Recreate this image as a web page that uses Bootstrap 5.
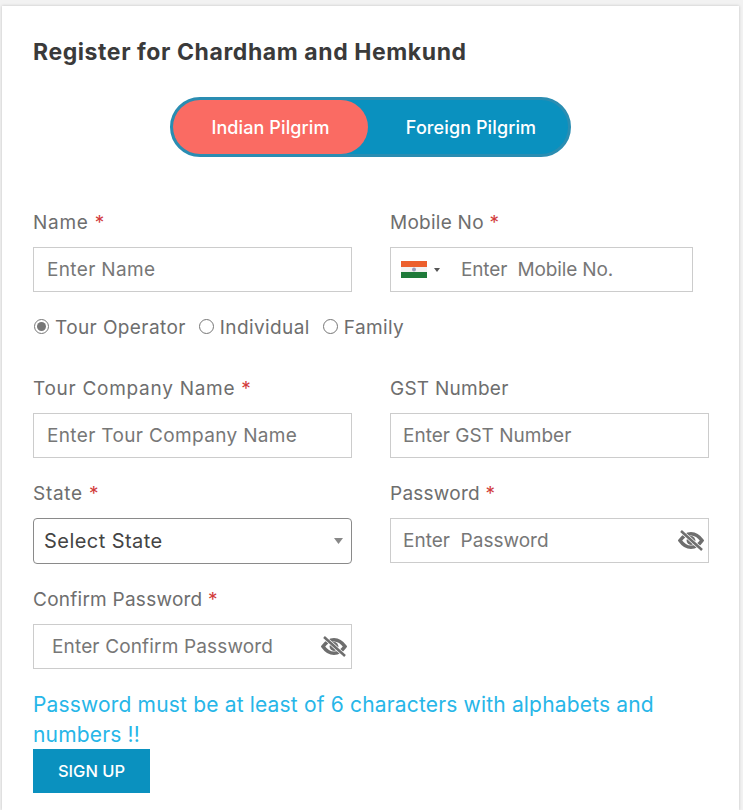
<!DOCTYPE html>
<html lang="en"><head><meta charset="utf-8"><title>Register</title>
<link href="https://cdn.jsdelivr.net/npm/bootstrap@5.3.0/dist/css/bootstrap.min.css" rel="stylesheet">
<style>
html,body{height:810px;overflow:hidden}
body{background:#f2f2f2;font-family:"Inter","Open Sans",sans-serif;color:#6e6e6e}
.sheet{margin:6px 0 0 2px;width:737px;height:804px;background:#fff;box-shadow:0 0 3px rgba(0,0,0,.2);padding:31px 30px 0 31px}
.sheet-title{font-size:23px;font-weight:700;color:#3a3a3a;line-height:30px;margin:0;letter-spacing:.58px}
.switcher{width:401px;height:60px;margin:30px 0 0 137px;border-radius:30px;background:#0a91bf;border:3px solid #2a8db2}
.switcher span{flex:0 0 195px;color:#fff;font-size:18px;font-weight:500;border-radius:27px;letter-spacing:.1px}
.switcher .tab-on{background:#fa6b63}
.switcher .tab-off{flex:1 1 auto;padding-left:6px}
.formrow{--bs-gutter-x:38px;--bs-gutter-y:0}
.first-row{margin-top:52px}
.second-row{margin-top:34px}
.lbl{font-size:19px;line-height:26px;color:#6e6e6e;margin:1px 0 11px;display:block;letter-spacing:.25px}
.lbl-wide{letter-spacing:.72px}
.lbl i{font-style:normal;color:#d23b3b}
.cell{margin-bottom:22px}
.form-control.fld{height:45px;border:1px solid #ccc;border-radius:0;font-size:19px;letter-spacing:.35px;color:#777;padding:0 13px;box-shadow:none}
.form-control.fld.tight{letter-spacing:0;padding-left:12px}
.fld::placeholder{color:#777;opacity:1}
.phone-wrap{width:303px}
.form-control.fld.phone{padding-left:70px;letter-spacing:-.15px}
.flag{position:absolute;left:11px;top:14px}
.flag-caret{position:absolute;left:44px;top:21px;width:0;height:0;border-left:3px solid transparent;border-right:3px solid transparent;border-top:4px solid #555}
.form-control.fld.pw{padding-right:44px}
.form-control.fld.pw-wide{padding-left:18px;letter-spacing:.15px}
.eye{position:absolute;right:5px;top:12px}
.radios{margin-top:23px;font-size:19px;line-height:26px;letter-spacing:.4px;gap:12px}
.radios label{gap:6px}
.radios input{width:15px;height:15px;margin:-3px 0 0 1px;accent-color:#777}
.form-select.sel{height:46px;border:1px solid #8a8a8a;border-radius:4px;padding:0 30px 0 10px;font-size:20px;letter-spacing:.45px;color:#444;box-shadow:none;background-size:9px 6px;background-position:right 8px center;background-image:url("data:image/svg+xml,%3Csvg xmlns='http://www.w3.org/2000/svg' viewBox='0 0 9 6'%3E%3Cpath d='M0 0h9L4.5 6z' fill='%23888'/%3E%3C/svg%3E")}
.hint{color:#27b6e8;font-size:21px;line-height:30px;margin:21px 0 -1px;letter-spacing:.17px}
.btn.go{display:block;width:117px;height:44px;background:#0a91bf;color:#fff;border:0;border-radius:0;font-size:16.5px;font-weight:500;padding:0}
</style></head><body>
<main class="sheet">
<h1 class="sheet-title">Register for Chardham and Hemkund</h1>
<div class="switcher d-flex"><span class="tab-on d-flex align-items-center justify-content-center">Indian Pilgrim</span><span class="tab-off d-flex align-items-center justify-content-center">Foreign Pilgrim</span></div>
<div class="row formrow first-row">
<div class="col-6"><label class="lbl lbl-wide">Name <i>*</i></label><input class="form-control fld" placeholder="Enter Name"></div>
<div class="col-6"><label class="lbl">Mobile No <i>*</i></label>
<div class="position-relative phone-wrap"><input class="form-control fld phone" placeholder="Enter  Mobile No.">
<svg class="flag" width="26" height="17" viewBox="0 0 26 17"><rect width="26" height="6" fill="#ec5f2c"/><rect y="6" width="26" height="5" fill="#f2f2f2"/><rect y="11" width="26" height="6" fill="#1f7a3a"/><circle cx="13" cy="8.5" r="2" fill="#9a9ab8"/></svg><span class="flag-caret"></span></div></div>
</div>
<div class="radios d-flex align-items-center">
<label class="d-flex align-items-center"><input type="radio" name="kind" checked>Tour Operator</label>
<label class="d-flex align-items-center"><input type="radio" name="kind">Individual</label>
<label class="d-flex align-items-center"><input type="radio" name="kind">Family</label></div>
<div class="row formrow second-row">
<div class="col-6 cell"><label class="lbl lbl-wide">Tour Company Name <i>*</i></label><input class="form-control fld" placeholder="Enter Tour Company Name"></div>
<div class="col-6 cell"><label class="lbl">GST Number</label><input class="form-control fld tight" placeholder="Enter GST Number"></div>
<div class="col-6 cell"><label class="lbl lbl-wide">State <i>*</i></label><select class="form-select sel"><option>Select State</option></select></div>
<div class="col-6 cell"><label class="lbl">Password <i>*</i></label><div class="position-relative"><input class="form-control fld pw tight" placeholder="Enter  Password">
<svg class="eye" width="26" height="21" viewBox="0 0 24 20"><path d="M1.5 10C5 5 9 3.5 12 3.5S19 5 22.5 10C19 15 15 16.5 12 16.5S5 15 1.5 10Z" fill="none" stroke="#6e6e6e" stroke-width="3.4"/><circle cx="12" cy="10" r="4.2" fill="#6e6e6e"/><path d="M3 1.5 22 18.5" stroke="#fff" stroke-width="3.8"/><path d="M2.5 1 22.5 19" stroke="#6e6e6e" stroke-width="2.4"/></svg></div></div>
<div class="col-6 cell mb-0"><label class="lbl">Confirm Password <i>*</i></label><div class="position-relative"><input class="form-control fld pw pw-wide" placeholder="Enter Confirm Password">
<svg class="eye" width="26" height="21" viewBox="0 0 24 20"><path d="M1.5 10C5 5 9 3.5 12 3.5S19 5 22.5 10C19 15 15 16.5 12 16.5S5 15 1.5 10Z" fill="none" stroke="#6e6e6e" stroke-width="3.4"/><circle cx="12" cy="10" r="4.2" fill="#6e6e6e"/><path d="M3 1.5 22 18.5" stroke="#fff" stroke-width="3.8"/><path d="M2.5 1 22.5 19" stroke="#6e6e6e" stroke-width="2.4"/></svg></div></div>
</div>
<p class="hint">Password must be at least of 6 characters with alphabets and numbers !!</p>
<button class="btn go" type="button">SIGN UP</button>
</main>
</body></html>
